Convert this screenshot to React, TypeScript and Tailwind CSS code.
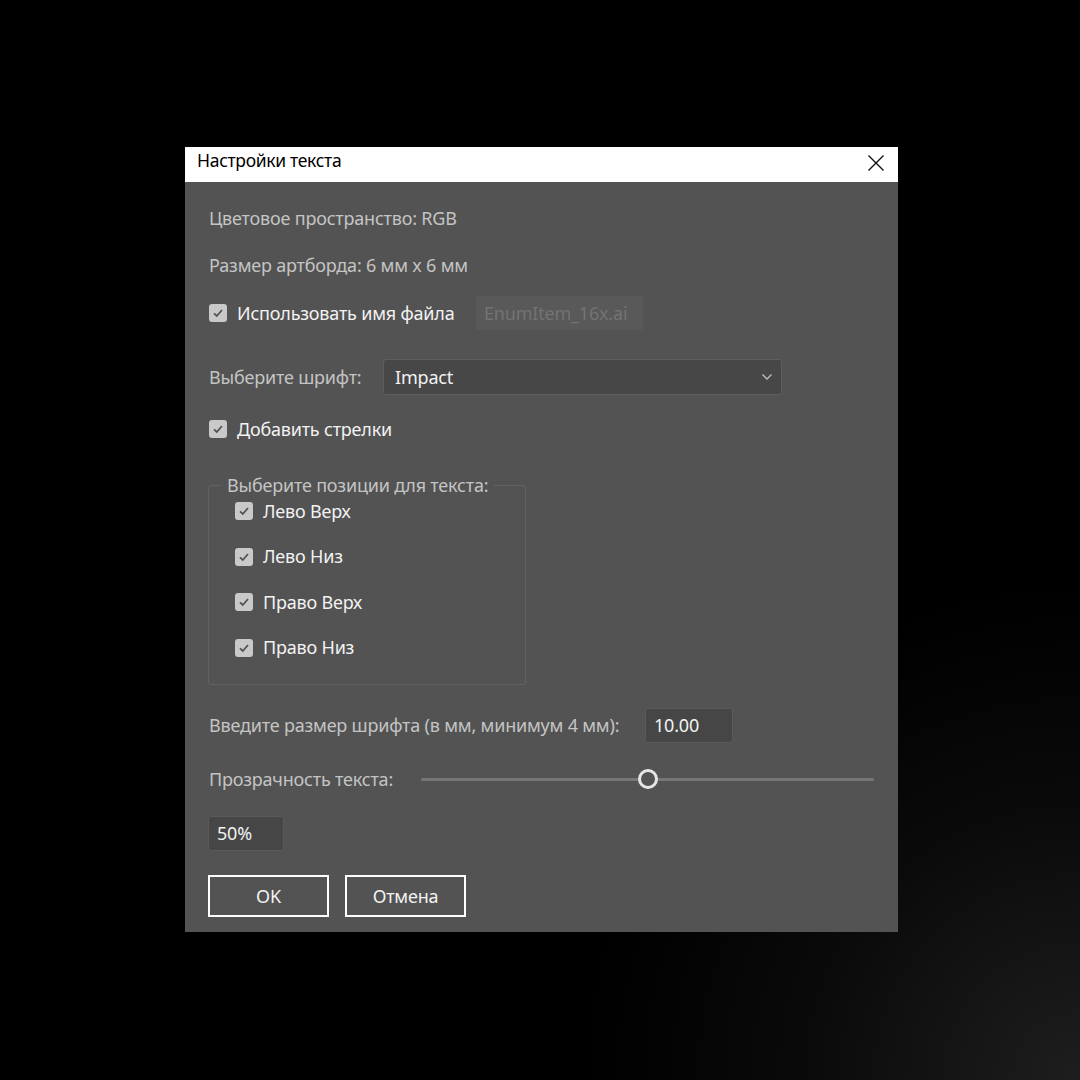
import React from "react";

function Check({ label }: { label: string }) {
  return (
    <div className="flex items-center h-[20px]">
      <div className="w-[18px] h-[18px] rounded-[3px] bg-[#c9c9c9] flex items-center justify-center">
        <svg width="12" height="12" viewBox="0 0 12 12">
          <path d="M2 6.3 L4.8 9 L10 3" fill="none" stroke="#535353" strokeWidth="1.8" />
        </svg>
      </div>
      <span className="ml-[10px] text-[#f2f2f2]">{label}</span>
    </div>
  );
}

export default function App() {
  return (
    <div
      className="w-[1080px] h-[1080px] bg-black relative overflow-hidden"
      style={{ fontFamily: "'Noto Sans', 'Open Sans', sans-serif" }}
    >
      <div className="absolute inset-0 bg-[radial-gradient(circle_at_100%_100%,#1e1e1e_0%,#0a0a0a_18%,#000_32%)]" />
      <div className="absolute left-[185px] top-[147px] w-[713px] h-[785px] bg-[#535353] flex flex-col">
        {/* title bar */}
        <div className="h-[35px] bg-white flex items-center justify-between pl-[12px] pr-[13px] pb-[9px] shrink-0">
          <span className="text-[17.5px] text-black tracking-[-0.3px]">Настройки текста</span>
          <svg width="18" height="18" viewBox="0 0 18 18" className="mt-[6px]">
            <path d="M1.5 1.5 L16.5 16.5 M16.5 1.5 L1.5 16.5" stroke="#111" strokeWidth="1.4" />
          </svg>
        </div>

        <div className="flex flex-col pl-[24px] text-[18px] text-[#c4c4c4] tracking-[-0.2px]">
          <div className="mt-[25px] h-[22px] flex items-center">Цветовое пространство: RGB</div>
          <div className="mt-[25px] h-[22px] flex items-center">Размер артборда: 6 мм x 6 мм</div>

          <div className="mt-[20px] flex items-center h-[34px]">
            <div className="w-[267px] text-[18px]">
              <Check label="Использовать имя файла" />
            </div>
            <div className="w-[167px] h-[34px] rounded-[3px] bg-[#595959] flex items-center pl-[8px] text-[#737373]">
              EnumItem_16x.ai
            </div>
          </div>

          <div className="mt-[29px] flex items-center h-[36px]">
            <div className="w-[174px]">Выберите шрифт:</div>
            <div className="w-[399px] h-[36px] rounded-[3px] bg-[#474747] border border-[#5e5e5e] flex items-center justify-between pl-[11px] pr-[8px] text-[#f2f2f2] text-[18px]">
              <span>Impact</span>
              <svg width="12" height="8" viewBox="0 0 12 8">
                <path d="M1.5 1.5 L6 6 L10.5 1.5" fill="none" stroke="#bdbdbd" strokeWidth="1.4" />
              </svg>
            </div>
          </div>

          <div className="mt-[24px] text-[18px]">
            <Check label="Добавить стрелки" />
          </div>

          <div className="mt-[46px] relative w-[318px] h-[200px] border border-[#626262] rounded-[3px] ml-[-1px]">
            <div className="absolute left-[12px] top-[-12px] px-[6px] bg-[#535353] h-[22px] flex items-center">
              Выберите позиции для текста:
            </div>
            <div className="flex flex-col pl-[26px] pt-[15px] gap-[25.5px] text-[18px]">
              <Check label="Лево Верх" />
              <Check label="Лево Низ" />
              <Check label="Право Верх" />
              <Check label="Право Низ" />
            </div>
          </div>

          <div className="mt-[23px] flex items-center h-[35px]">
            <div className="w-[436px]">Введите размер шрифта (в мм, минимум 4 мм):</div>
            <div className="w-[88px] h-[35px] rounded-[3px] bg-[#464646] border border-[#5a5a5a] flex items-center pl-[8px] text-[#f2f2f2] text-[18px]">
              10.00
            </div>
          </div>

          <div className="mt-[24px] flex items-center h-[24px]">
            <div className="w-[212px]">Прозрачность текста:</div>
            <div className="relative w-[453px] h-[24px] flex items-center">
              <div className="w-full h-[3px] bg-[#767676] rounded-full" />
              <div className="absolute left-[217px] top-[2px] w-[20px] h-[20px] rounded-full border-[3px] border-[#e6e6e6] bg-[#535353]" />
            </div>
          </div>

          <div className="mt-[25px] ml-[-1px] w-[76px] h-[35px] rounded-[3px] bg-[#464646] border border-[#5a5a5a] flex items-center pl-[8px] text-[#f2f2f2] text-[18px]">
            50%
          </div>

          <div className="mt-[24px] ml-[-1px] flex gap-[16px] text-[18px] text-[#f2f2f2]">
            <div className="w-[121px] h-[42px] border-[2px] border-white flex items-center justify-center">OK</div>
            <div className="w-[121px] h-[42px] border-[2px] border-white flex items-center justify-center">Отмена</div>
          </div>
        </div>
      </div>
    </div>
  );
}
